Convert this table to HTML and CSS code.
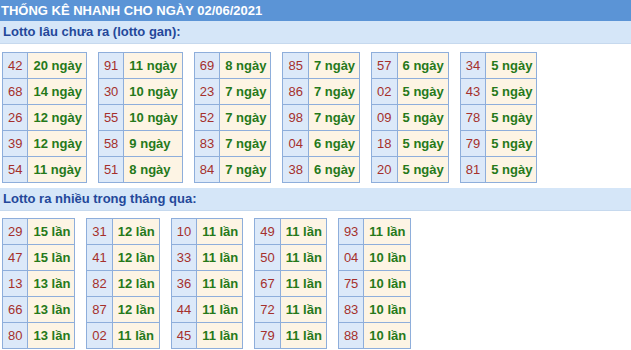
FILE: index.html
```html
<!DOCTYPE html>
<html lang="vi">
<head>
<meta charset="utf-8">
<title>Thống kê nhanh</title>
<link rel="stylesheet" href="styles.css">
</head>
<body>
<div class="title">THỐNG KÊ NHANH CHO NGÀY 02/06/2021</div>

<div class="heading">Lotto lâu chưa ra (lotto gan):</div>
<div class="group group-gan">
  <table class="lt"><tr><td class="n">42</td><td class="v">20 ngày</td></tr><tr><td class="n">68</td><td class="v">14 ngày</td></tr><tr><td class="n">26</td><td class="v">12 ngày</td></tr><tr><td class="n">39</td><td class="v">12 ngày</td></tr><tr><td class="n">54</td><td class="v">11 ngày</td></tr></table>
  <table class="lt"><tr><td class="n">91</td><td class="v">11 ngày</td></tr><tr><td class="n">30</td><td class="v">10 ngày</td></tr><tr><td class="n">55</td><td class="v">10 ngày</td></tr><tr><td class="n">58</td><td class="v">9 ngày</td></tr><tr><td class="n">51</td><td class="v">8 ngày</td></tr></table>
  <table class="lt"><tr><td class="n">69</td><td class="v">8 ngày</td></tr><tr><td class="n">23</td><td class="v">7 ngày</td></tr><tr><td class="n">52</td><td class="v">7 ngày</td></tr><tr><td class="n">83</td><td class="v">7 ngày</td></tr><tr><td class="n">84</td><td class="v">7 ngày</td></tr></table>
  <table class="lt"><tr><td class="n">85</td><td class="v">7 ngày</td></tr><tr><td class="n">86</td><td class="v">7 ngày</td></tr><tr><td class="n">98</td><td class="v">7 ngày</td></tr><tr><td class="n">04</td><td class="v">6 ngày</td></tr><tr><td class="n">38</td><td class="v">6 ngày</td></tr></table>
  <table class="lt"><tr><td class="n">57</td><td class="v">6 ngày</td></tr><tr><td class="n">02</td><td class="v">5 ngày</td></tr><tr><td class="n">09</td><td class="v">5 ngày</td></tr><tr><td class="n">18</td><td class="v">5 ngày</td></tr><tr><td class="n">20</td><td class="v">5 ngày</td></tr></table>
  <table class="lt"><tr><td class="n">34</td><td class="v">5 ngày</td></tr><tr><td class="n">43</td><td class="v">5 ngày</td></tr><tr><td class="n">78</td><td class="v">5 ngày</td></tr><tr><td class="n">79</td><td class="v">5 ngày</td></tr><tr><td class="n">81</td><td class="v">5 ngày</td></tr></table>
</div>

<div class="heading heading-2">Lotto ra nhiều trong tháng qua:</div>
<div class="group group-hot">
  <table class="lt"><tr><td class="n">29</td><td class="v">15 lần</td></tr><tr><td class="n">47</td><td class="v">15 lần</td></tr><tr><td class="n">13</td><td class="v">13 lần</td></tr><tr><td class="n">66</td><td class="v">13 lần</td></tr><tr><td class="n">80</td><td class="v">13 lần</td></tr></table>
  <table class="lt"><tr><td class="n">31</td><td class="v">12 lần</td></tr><tr><td class="n">41</td><td class="v">12 lần</td></tr><tr><td class="n">82</td><td class="v">12 lần</td></tr><tr><td class="n">87</td><td class="v">12 lần</td></tr><tr><td class="n">02</td><td class="v">11 lần</td></tr></table>
  <table class="lt"><tr><td class="n">10</td><td class="v">11 lần</td></tr><tr><td class="n">33</td><td class="v">11 lần</td></tr><tr><td class="n">36</td><td class="v">11 lần</td></tr><tr><td class="n">44</td><td class="v">11 lần</td></tr><tr><td class="n">45</td><td class="v">11 lần</td></tr></table>
  <table class="lt"><tr><td class="n">49</td><td class="v">11 lần</td></tr><tr><td class="n">50</td><td class="v">11 lần</td></tr><tr><td class="n">67</td><td class="v">11 lần</td></tr><tr><td class="n">72</td><td class="v">11 lần</td></tr><tr><td class="n">79</td><td class="v">11 lần</td></tr></table>
  <table class="lt"><tr><td class="n">93</td><td class="v">11 lần</td></tr><tr><td class="n">04</td><td class="v">10 lần</td></tr><tr><td class="n">75</td><td class="v">10 lần</td></tr><tr><td class="n">83</td><td class="v">10 lần</td></tr><tr><td class="n">88</td><td class="v">10 lần</td></tr></table>
</div>
</body>
</html>
```
FILE: styles.css
```css
html, body {
  margin: 0;
  padding: 0;
  background: #ffffff;
  font-family: "Liberation Sans", Arial, sans-serif;
  font-size: 13px;
}

.title {
  height: 21px;
  line-height: 21px;
  background: #5b94d6;
  color: #ffffff;
  font-weight: bold;
  font-size: 13px;
  padding-left: 1px;
  white-space: nowrap;
  overflow: hidden;
}

.heading {
  height: 22px;
  line-height: 22px;
  background: #d5e6f8;
  border-bottom: 1px solid #c6d9ee;
  color: #24489a;
  font-weight: bold;
  font-size: 13px;
  padding-left: 3px;
}

.heading-2 {
  margin-top: 5px;
}

.group {
  display: flex;
  gap: 11px;
  padding-left: 2px;
  margin-top: 8px;
}

.group-hot {
  margin-top: 7px;
}

.lt {
  border-collapse: collapse;
  border: 1px solid #8eaedb;
}

.lt td {
  border: 1px solid #8eaedb;
  height: 25px;
  padding: 0 5px;
  line-height: 25px;
  white-space: nowrap;
}

.lt .n {
  background: #dce9f9;
  color: #a5302c;
  text-align: center;
  padding-left: 5px;
  padding-right: 5px;
}

.lt .v {
  background: #fdf4e4;
  color: #25791a;
  font-weight: bold;
  padding-left: 5px;
  padding-right: 4px;
}
```
